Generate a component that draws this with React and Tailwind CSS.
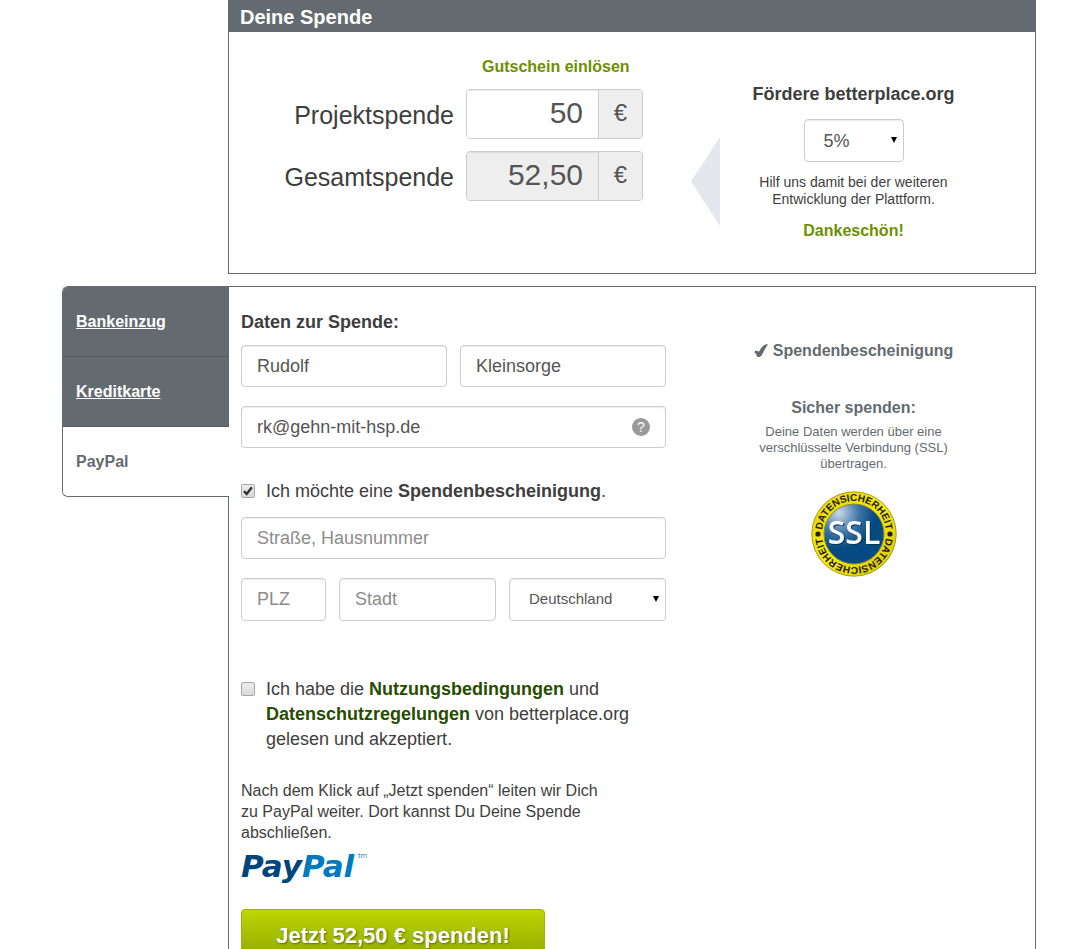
import React, { useState } from "react";

const fieldClass =
    "w-full min-w-0 rounded border border-[#ccc] bg-white px-[15px] text-lg text-[#555] placeholder-[#8c8c8c] shadow-[inset_0_1px_1px_rgba(0,0,0,0.075)] focus:border-[#7a9a1a] focus:outline-none";

const TABS = ["Bankeinzug", "Kreditkarte", "PayPal"];

const Field = ({ id, label, className = "h-[42px]", ...props }) => {
    return <input id={id} aria-label={label} className={`${fieldClass} ${className}`} {...props} />;
};

const Select = ({ id, label, options, className }) => {
    return (
        <div className={`relative ${className}`}>
            <select
                id={id}
                aria-label={label}
                className="h-[43px] w-full appearance-none rounded border border-[#ccc] bg-white pr-6 pl-[19px] text-[#555] shadow-[inset_0_1px_1px_rgba(0,0,0,0.075)] focus:outline-none"
            >
                {options.map((option) => (
                    <option key={option}>{option}</option>
                ))}
            </select>
            <svg className="pointer-events-none absolute top-[18px] right-[7px] h-[6px] w-[6px]" viewBox="0 0 6 6">
                <path d="M0 0h6L3 6z" fill="#000" />
            </svg>
        </div>
    );
};

const Checkbox = ({ id, children, ...props }) => {
    return (
        <div className="flex items-start gap-[11px]">
            <span className="mt-[5px] grid h-[14px] w-[14px] shrink-0">
                <input
                    id={id}
                    type="checkbox"
                    className="peer col-start-1 row-start-1 h-[14px] w-[14px] appearance-none rounded-xs border border-[#a8a8a8] bg-linear-to-b from-[#ececec] to-[#dadada]"
                    {...props}
                />
                <svg
                    className="pointer-events-none col-start-1 row-start-1 hidden h-[14px] w-[14px] peer-checked:block"
                    viewBox="0 0 14 14"
                    fill="none"
                    stroke="#333"
                    strokeWidth="2.4"
                >
                    <path d="M3 7.2l2.7 2.8 5.2-6.8" />
                </svg>
            </span>
            <label htmlFor={id} className="text-lg leading-[25px]">{children}</label>
        </div>
    );
};

const Amount = ({ id, label, readOnly, ...props }) => {
    return (
        <>
            <label htmlFor={id} className="pt-1 text-right text-[25px]">{label}</label>
            <div className="flex h-[50px] w-[177px] overflow-hidden rounded border border-[#ccc] text-[#555]">
                <input
                    id={id}
                    readOnly={readOnly}
                    className={`w-[132px] border-r border-[#ccc] pr-[15px] pb-[2px] text-right text-3xl shadow-[inset_0_1px_1px_rgba(0,0,0,0.075)] focus:outline-none ${readOnly ? "bg-[#eee]" : "bg-white"}`}
                    {...props}
                />
                <span className="flex flex-1 items-center justify-center bg-[#eee] pb-[3px] text-2xl">€</span>
            </div>
        </>
    );
};

const SslSeal = () => {
    return (
        <svg className="mx-auto mt-[19px] h-[86px] w-[86px]" viewBox="0 0 86 86" role="img" aria-label="SSL Datensicherheit">
            <defs>
                <radialGradient id="seal-blue" cx="0.25" cy="0.15" r="0.75">
                    <stop offset="0" stopColor="#c9d9e8" />
                    <stop offset="0.45" stopColor="#3d74a5" />
                    <stop offset="0.8" stopColor="#054a80" />
                </radialGradient>
                <linearGradient id="seal-yellow" x1="0" y1="0" x2="1" y2="1">
                    <stop offset="0" stopColor="#e3d400" />
                    <stop offset="0.5" stopColor="#f8ea10" />
                    <stop offset="1" stopColor="#d3c300" />
                </linearGradient>
                <path id="seal-top" d="M11 42A32 32 0 0 1 75 42" />
                <path id="seal-bottom" d="M75 44A32 32 0 0 1 11 44" />
            </defs>
            <circle cx="43" cy="43" r="42.2" fill="url(#seal-yellow)" stroke="#a89b1d" strokeWidth="1" />
            <circle cx="43" cy="43" r="30" fill="url(#seal-blue)" stroke="#8d8b3a" strokeWidth="1" />
            <circle cx="7" cy="43" r="2.6" fill="#222" />
            <circle cx="79" cy="43" r="2.6" fill="#222" />
            <g fill="#1c1c00" fontFamily="Liberation Sans, Arial, sans-serif" fontWeight="700" fontSize="10" textAnchor="middle">
                <text><textPath href="#seal-top" startOffset="50%">DATENSICHERHEIT</textPath></text>
                <text><textPath href="#seal-bottom" startOffset="50%">DATENSICHERHEIT</textPath></text>
            </g>
            <text
                x="43"
                y="53"
                className="drop-shadow-[1px_1px_0_#06345a]"
                fill="#fff"
                fontFamily="Open Sans, Noto Sans, sans-serif"
                fontWeight="600"
                fontSize="32"
                textAnchor="middle"
            >
                SSL
            </text>
        </svg>
    );
};

const PayPalLogo = () => {
    return (
        <svg className="mt-2 h-9 w-32 overflow-visible" viewBox="0 0 128 36" role="img" aria-label="PayPal">
            <text x="0" y="26" fontFamily="DejaVu Sans, Verdana, sans-serif" fontStyle="italic" fontSize="31" fontWeight="700">
                <tspan fill="#00457c">Pay</tspan>
                <tspan fill="#0079c1">Pal</tspan>
            </text>
            <text x="117" y="7" fontFamily="Open Sans, sans-serif" fontSize="7" fill="#0079c1">tm</text>
        </svg>
    );
};

const App = () => {
    const [activeTab, setActiveTab] = useState("PayPal");
    const [amount, setAmount] = useState("50");

    const total = ((parseFloat(amount.replace(",", ".")) || 0) * 1.05).toFixed(2).replace(".", ",");

    return (
        <main className="bg-white pr-[38px] pb-8 pl-[62px] font-['Liberation_Sans',Arial,sans-serif] text-[#3e3e3e]">
            {/* Donation amount */}
            <section className="ml-[166px] border border-t-0 border-[#646b70]">
                <h2 className="h-8 bg-[#646b70] pl-[11px] text-xl leading-[34px] font-bold text-white">Deine Spende</h2>
                <div className="flex min-h-[241px] items-start pr-12">
                    <div className="flex flex-1 justify-end pt-[23px] pr-12">
                        <div className="grid grid-cols-[auto_177px] items-center gap-x-3 gap-y-3">
                            <a href="#gutschein" className="col-start-2 -mb-0.5 pl-4 text-base leading-6 font-bold text-[#6b9000]">
                                Gutschein einlösen
                            </a>
                            <Amount id="projekt" label="Projektspende" value={amount} onChange={(e) => setAmount(e.target.value)} />
                            <Amount id="gesamt" label="Gesamtspende" value={total} readOnly />
                        </div>
                    </div>
                    <svg className="mt-[105px] h-[89px] w-[29px] shrink-0" viewBox="0 0 29 89">
                        <path d="M29 0v89L0 44.5z" fill="#e6e7ec" />
                    </svg>
                    <div className="w-[267px] px-6 pt-[50px] text-center">
                        <h3 className="text-lg leading-6 font-bold whitespace-nowrap">Fördere betterplace.org</h3>
                        <Select
                            id="foerderung"
                            label="Förderung"
                            options={["5%", "10%", "15%"]}
                            className="mx-auto mt-[13px] w-[100px] text-lg"
                        />
                        <p className="mt-3 text-sm leading-[17px]">Hilf uns damit bei der weiteren Entwicklung der Plattform.</p>
                        <p className="mt-[11px] text-base leading-6 font-bold text-[#6b9000]">Dankeschön!</p>
                    </div>
                </div>
            </section>

            {/* Payment method and donor data */}
            <div className="mt-3 flex items-start">
                <nav className="z-10 -mr-px w-[167px] shrink-0 overflow-hidden rounded-l-md border border-r-0 border-[#646b70] bg-white">
                    <ul>
                        {TABS.map((tab) => (
                            <li key={tab} className="border-t border-[#565c60] first:border-t-0">
                                <a
                                    href="#zahlung"
                                    onClick={() => setActiveTab(tab)}
                                    className={`block h-[69px] pl-[13px] text-base leading-[70px] font-bold ${
                                        tab === activeTab ? "bg-white text-[#646b70]" : "bg-[#646b70] text-white underline"
                                    }`}
                                >
                                    {tab}
                                </a>
                            </li>
                        ))}
                    </ul>
                </nav>

                <section className="flex flex-1 items-start border border-[#646b70] pt-[23px] pr-12 pb-8 pl-3">
                    <form className="min-w-0 flex-1" onSubmit={(e) => e.preventDefault()}>
                        <h3 className="text-lg leading-6 font-bold">Daten zur Spende:</h3>
                        <div className="mt-[11px] grid grid-cols-2 gap-[13px]">
                            <Field id="vorname" label="Vorname" defaultValue="Rudolf" />
                            <Field id="nachname" label="Nachname" defaultValue="Kleinsorge" />
                        </div>
                        <div className="relative mt-[19px]">
                            <Field id="email" label="E-Mail" defaultValue="rk@gehn-mit-hsp.de" />
                            <button
                                type="button"
                                className="absolute top-3 right-4 h-[18px] w-[18px] rounded-full bg-[#999] text-sm leading-[18px] text-white"
                            >
                                ?
                            </button>
                        </div>

                        <div className="mt-[31px]">
                            <Checkbox id="bescheinigung" defaultChecked>
                                Ich möchte eine <strong>Spendenbescheinigung</strong>.
                            </Checkbox>
                        </div>
                        <div className="mt-[13px]">
                            <Field id="strasse" label="Straße, Hausnummer" placeholder="Straße, Hausnummer" />
                        </div>
                        <div className="mt-[19px] grid grid-cols-[85px_1fr_1fr] gap-[13px]">
                            <Field id="plz" label="PLZ" placeholder="PLZ" className="h-[43px]" />
                            <Field id="stadt" label="Stadt" placeholder="Stadt" className="h-[43px]" />
                            <Select
                                id="land"
                                label="Land"
                                options={["Deutschland", "Österreich", "Schweiz"]}
                                className="min-w-0 text-[15px]"
                            />
                        </div>

                        <div className="mt-14">
                            <Checkbox id="agb">
                                Ich habe die <a href="#nutzung" className="font-bold text-[#264d00]">Nutzungsbedingungen</a> und{" "}
                                <a href="#datenschutz" className="font-bold text-[#264d00]">Datenschutzregelungen</a> von
                                betterplace.org gelesen und akzeptiert.
                            </Checkbox>
                        </div>

                        <p className="mt-7 max-w-[375px] text-base leading-[21px]">
                            Nach dem Klick auf „Jetzt spenden“ leiten wir Dich zu PayPal weiter. Dort kannst Du Deine Spende
                            abschließen.
                        </p>
                        <PayPalLogo />
                        <button
                            type="submit"
                            className="mt-[22px] h-[52px] w-[304px] rounded border border-[#9db400] bg-linear-to-b from-[#bdd602] to-[#90a800] text-[22px] font-bold text-white [text-shadow:1px_1px_2px_#5a6b00]"
                        >
                            Jetzt {total} € spenden!
                        </button>
                    </form>

                    <aside className="ml-[54px] w-[267px] shrink-0 px-6 pt-[29px] text-center text-[#646b70]">
                        <p className="flex items-center justify-center gap-[5px] text-base leading-6 font-bold">
                            <svg className="h-[14px] w-[14px] shrink-0" viewBox="0 0 14 14" fill="currentColor">
                                <path d="M0.2 8.2C1.2 6.6 3 6.4 4.1 7.300L4.700 8C6.300 5.200 8.100 2.500 10.200 0.900C11.200 0.200 12.700 0 14 0.200C11.400 3.900 9.400 7.700 7.600 11.600C6.400 13.300 3.900 13.500 3 12.400C2.400 10.800 1.700 9 0.200 8.200Z" />
                            </svg>
                            Spendenbescheinigung
                        </p>
                        <h4 className="mt-[33px] text-base leading-6 font-bold">Sicher spenden:</h4>
                        <p className="mt-1 text-[13px] leading-4">
                            Deine Daten werden über eine verschlüsselte Verbindung (SSL) übertragen.
                        </p>
                        <SslSeal />
                    </aside>
                </section>
            </div>
        </main>
    );
};

export default App;
